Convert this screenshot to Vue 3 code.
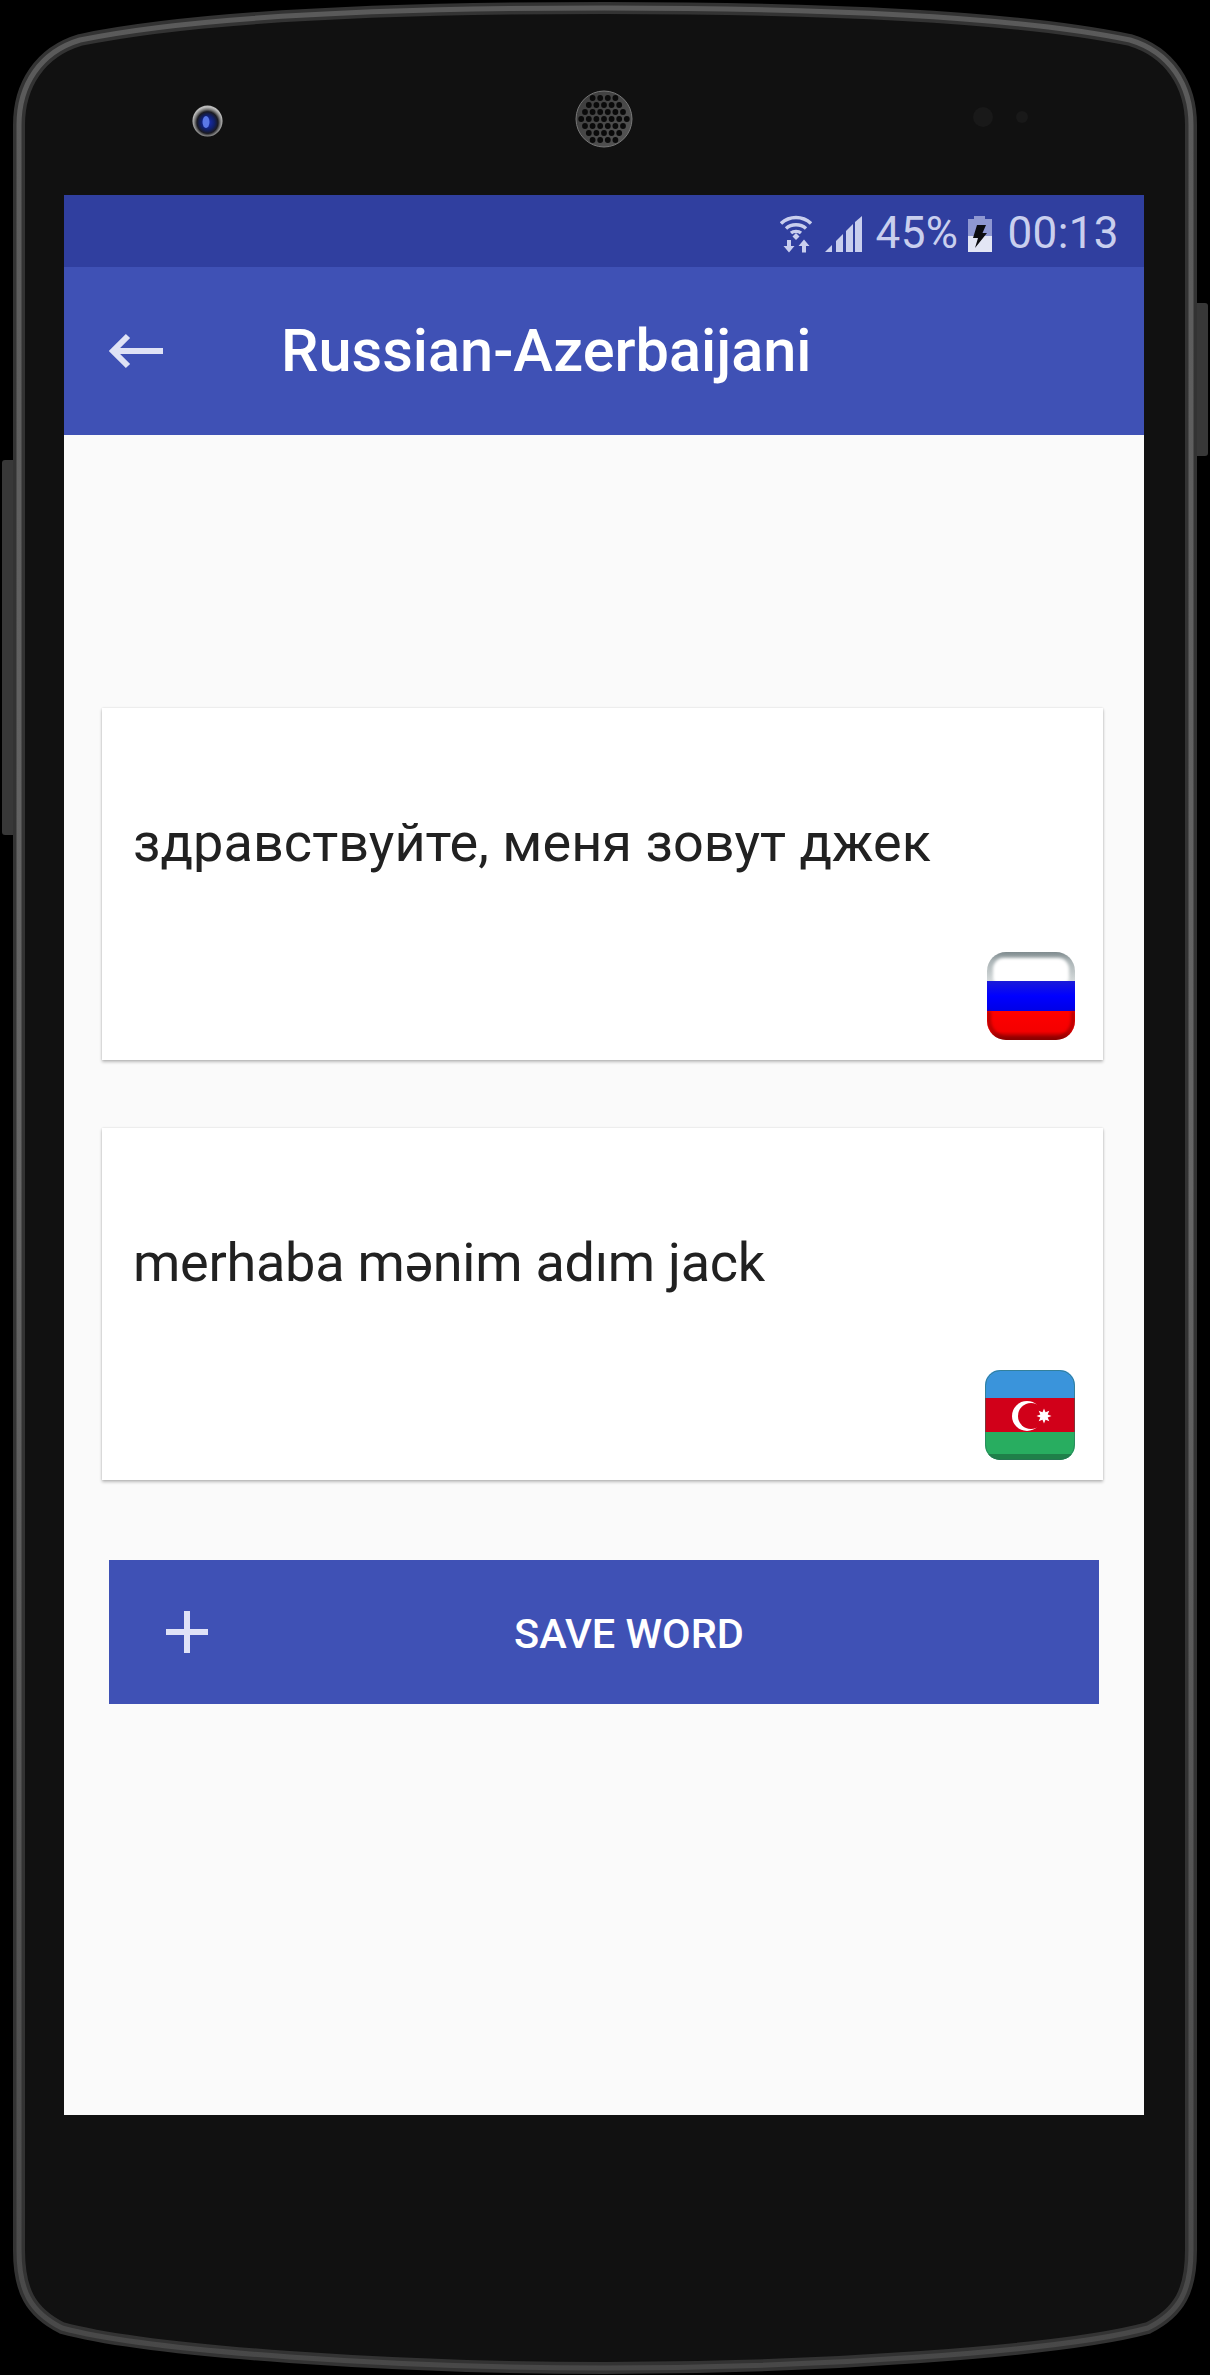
<template>
  <div class="device">
    <!-- Корпус телефона -->
    <svg class="body-art" width="1210" height="2375" viewBox="0 0 1210 2375">
      <defs>
        <linearGradient id="rim" x1="0" y1="0" x2="0" y2="1">
          <stop offset="0" stop-color="#5a5a5a" />
          <stop offset="0.5" stop-color="#666666" />
          <stop offset="1" stop-color="#484848" />
        </linearGradient>
        <radialGradient id="lens" cx="0.5" cy="0.55" r="0.5">
          <stop offset="0" stop-color="#1a2fc0" />
          <stop offset="0.45" stop-color="#10206e" />
          <stop offset="0.7" stop-color="#1a1a22" />
          <stop offset="0.85" stop-color="#777" />
          <stop offset="1" stop-color="#bbb" />
        </radialGradient>
        <linearGradient id="grille" x1="0" y1="0" x2="1" y2="1">
          <stop offset="0" stop-color="#3a3a3a" />
          <stop offset="1" stop-color="#565656" />
        </linearGradient>
      </defs>
      <rect x="2" y="460" width="14" height="375" rx="3" fill="#383838" />
      <rect x="1194" y="303" width="14" height="153" rx="3" fill="#383838" />
      <path :d="bodyPath" fill="#111111" stroke="#333333" stroke-width="12" />
      <path :d="bodyPath" fill="none" stroke="url(#rim)" stroke-width="5" />
      <ellipse cx="207.500" cy="121" rx="15" ry="15.500" fill="url(#lens)" />
      <ellipse cx="206" cy="122" rx="3.500" ry="6" fill="#5a78e8" />
      <circle cx="604" cy="119" r="28" fill="url(#grille)" stroke="#777777" stroke-width="1" />
      <circle
        v-for="(hole, i) in speakerHoles"
        :key="i"
        :cx="hole.x"
        :cy="hole.y"
        r="2.900"
        fill="#0a0a0a"
      />
      <circle cx="983" cy="117" r="10" fill="#191919" />
      <circle cx="1022" cy="117" r="6" fill="#191919" />
    </svg>

    <div class="screen">
      <div class="status-bar">
        <svg class="icon-wifi" width="32" height="38" viewBox="0 0 32 38">
          <g fill="none" stroke="#c9cfee" stroke-width="3.400" stroke-linecap="butt">
            <path d="M1 8.500C9.500 .5 22.500 .5 31 8.500" />
            <path d="M6 13.500C11.500 8.500 20.500 8.500 26 13.500" />
            <path d="M11 18C13.500 15.800 18.500 15.800 21 18" />
          </g>
          <path d="M16 18l3.500 3.500L16 25l-3.500-3.500z" fill="#c9cfee" />
          <path d="M7 25h4v6h3.500L9 37.500 3.500 31H7zM22 37.500v-6.500h-3.500L24 24.500l5.500 6.500H26v6.500z" fill="#c9cfee" />
        </svg>
        <svg class="icon-signal" width="37" height="36" viewBox="0 0 37 36">
          <path d="M0 36L7 29V36z" fill="#c9cfee" />
          <path d="M11 25L18 18V36H11z" fill="#c9cfee" />
          <path d="M21 15L28 8V36H21z" fill="#c9cfee" />
          <path d="M30 6L37 0V36H30z" fill="#c9cfee" />
        </svg>
        <span class="status-text pct">45%</span>
        <svg class="icon-battery" width="24" height="36" viewBox="0 0 24 36">
          <path d="M6 0h11v3h7v17H0V3h6z" fill="#8f98d2" />
          <rect y="20" width="24" height="16" fill="#e3e6f5" />
          <path d="M9 9h9l-3.500 8H19L7 32l3-10H5z" fill="#0c0c10" />
        </svg>
        <span class="status-text clock">00:13</span>
      </div>

      <header class="toolbar">
        <svg class="back-arrow" width="56" height="36" viewBox="0 0 56 36">
          <path d="M55 18H5M20 3L5 18l15 15" fill="none" stroke="#dfe2f5" stroke-width="6" />
        </svg>
        <h1 class="toolbar-title">{{ title }}</h1>
      </header>

      <main class="content">
        <section v-for="card in cards" :key="card.lang" class="card">
          <p :class="['card-text', `text-${card.lang}`]">{{ card.text }}</p>
          <div class="flag">
            <svg v-if="card.lang === 'ru'" width="88" height="88" viewBox="0 0 88 88">
              <defs>
                <clipPath id="ruClip"><rect width="88" height="88" rx="19" /></clipPath>
                <filter id="soft" x="-10%" y="-10%" width="120%" height="120%">
                  <feGaussianBlur stdDeviation="1.500" />
                </filter>
                <linearGradient id="ruTop" x1="0" y1="0" x2="0" y2="1">
                  <stop offset="0" stop-color="#7f8b8e" />
                  <stop offset="0.3" stop-color="#aab3b5" />
                  <stop offset="1" stop-color="#d4d9da" />
                </linearGradient>
                <linearGradient id="ruBlue" x1="0" y1="0" x2="0" y2="1">
                  <stop offset="0" stop-color="#1a1ad8" />
                  <stop offset="0.5" stop-color="#0000ff" />
                  <stop offset="1" stop-color="#0000e6" />
                </linearGradient>
                <linearGradient id="ruRed" x1="0" y1="0" x2="0" y2="1">
                  <stop offset="0" stop-color="#ff0000" />
                  <stop offset="0.7" stop-color="#f40000" />
                  <stop offset="1" stop-color="#8a0000" />
                </linearGradient>
              </defs>
              <g clip-path="url(#ruClip)">
                <rect width="88" height="29" fill="url(#ruTop)" />
                <rect x="6" y="6" width="76" height="30" rx="11" fill="#ffffff" filter="url(#soft)" />
                <rect y="29" width="88" height="30" fill="url(#ruBlue)" />
                <rect y="59" width="88" height="29" fill="url(#ruRed)" />
                <path d="M2 59V68C2 78 10 86 20 86H68C78 86 86 78 86 68V59" fill="none" stroke="#800000" stroke-opacity=".55" stroke-width="4" filter="url(#soft)" />
              </g>
            </svg>
            <svg v-else width="90" height="90" viewBox="0 0 90 90">
              <defs>
                <clipPath id="azClip"><rect width="90" height="90" rx="15" /></clipPath>
              </defs>
              <g clip-path="url(#azClip)">
                <rect width="90" height="28" fill="#3a94db" />
                <rect y="28" width="90" height="34" fill="#d10019" />
                <rect y="62" width="90" height="28" fill="#28ad60" />
                <rect y="84" width="90" height="6" fill="#1f8049" />
              </g>
              <rect x=".5" y=".5" width="89" height="89" rx="15" fill="none" stroke="#2b6b5c" stroke-opacity=".5" />
              <circle cx="42" cy="46" r="15" fill="#ffffff" />
              <circle cx="46" cy="46" r="13" fill="#d10019" />
              <polygon :points="starPoints" fill="#ffffff" />
            </svg>
          </div>
        </section>

        <button class="save-btn" type="button">
          <svg class="plus" width="42" height="42" viewBox="0 0 42 42">
            <path d="M18 0h6v18h18v6H24v18h-6V24H0v-6h18z" fill="#dfe2f7" />
          </svg>
          <span class="save-label">SAVE WORD</span>
        </button>
      </main>
    </div>
  </div>
</template>

<script setup>
const title = 'Russian-Azerbaijani'

const cards = [
  { lang: 'ru', text: 'здравствуйте, меня зовут джек' },
  { lang: 'az', text: 'merhaba mənim adım jack' },
]

const bodyPath =
  'M605 8C810 8 1010 15 1130 40C1170 52 1191 85 1191 125L1191 2250C1191 2290 1180 2312 1148 2328' +
  'C1060 2352 810 2368 605 2368C400 2368 150 2352 62 2328C30 2312 19 2290 19 2250L19 125' +
  'C19 85 40 52 80 40C200 15 400 8 605 8Z'

// Отверстия динамика, рядами от центра
const speakerHoles = []
for (let row = -3; row <= 3; row++) {
  const count = 7 - Math.abs(row)
  for (let col = 0; col < count; col++) {
    speakerHoles.push({
      x: 604 + (col - (count - 1) / 2) * 7.6,
      y: 119 + row * 7,
    })
  }
}

// Восьмиконечная звезда флага
const starPoints = (() => {
  const pts = []
  for (let i = 0; i < 16; i++) {
    const r = i % 2 ? 4 : 7.500
    const a = (Math.PI * i) / 8
    pts.push(`${(59 + r * Math.cos(a)).toFixed(2)},${(46 + r * Math.sin(a)).toFixed(2)}`)
  }
  return pts.join(' ')
})()
</script>

<style scoped>
.device {
  position: relative;
  width: 1210px;
  height: 2375px;
  background: #000;
  overflow: hidden;
  padding: 195px 66px 0 64px;
  box-sizing: border-box;
  font-family: Roboto, 'Liberation Sans', sans-serif;
}

.body-art {
  position: absolute;
  left: 0;
  top: 0;
}

.screen {
  position: relative;
  width: 1080px;
  height: 1920px;
  background: #fafafa;
  display: flex;
  flex-direction: column;
}

.status-bar {
  height: 72px;
  background: #303f9f;
  display: flex;
  align-items: center;
  justify-content: flex-end;
  padding-right: 25px;
  box-sizing: border-box;
}

.status-text {
  color: #c9cfee;
  font-size: 44px;
  line-height: 72px;
  letter-spacing: 0.4px;
  padding-top: 3px;
}

.icon-wifi {
  margin-right: 13px;
  margin-top: 6px;
}

.icon-signal {
  margin-right: 14px;
  margin-top: 6px;
}

.pct {
  margin-right: 10px;
}

.icon-battery {
  margin-right: 15px;
  margin-top: 6px;
}

.toolbar {
  height: 168px;
  background: #3f51b5;
  display: flex;
  align-items: center;
  padding-left: 44px;
  box-sizing: border-box;
}

.back-arrow {
  flex: none;
}

.toolbar-title {
  margin: 0 0 0 117px;
  color: #ffffff;
  font-size: 59.500px;
  font-weight: 500;
}

.content {
  flex: 1;
  padding: 273px 41px 0 38px;
  box-sizing: border-box;
  display: flex;
  flex-direction: column;
}

.card {
  height: 352px;
  background: #ffffff;
  box-shadow: 0 2px 3px rgba(0, 0, 0, 0.25), 0 0 2px rgba(0, 0, 0, 0.12);
  margin-bottom: 68px;
  display: flex;
  flex-direction: column;
  box-sizing: border-box;
  padding: 98px 28px 20px 31px;
}

.card-text {
  margin: 0;
  color: #212121;
  font-size: 54px;
  line-height: 74px;
}

.text-ru {
  letter-spacing: 0.05px;
}

.text-az {
  letter-spacing: -0.26px;
}

.flag {
  margin-top: auto;
  align-self: flex-end;
  line-height: 0;
}

.save-btn {
  margin: 12px 4px 0 7px;
  height: 144px;
  border: none;
  background: #3f51b5;
  display: flex;
  align-items: center;
  padding: 0 0 0 57px;
  font-family: inherit;
}

.plus {
  flex: none;
}

.save-label {
  margin-left: 306px;
  padding-top: 2px;
  color: #ffffff;
  font-size: 41.500px;
  font-weight: 500;
}
</style>

<style>
html,
body {
  margin: 0;
  background: #000;
}
</style>
